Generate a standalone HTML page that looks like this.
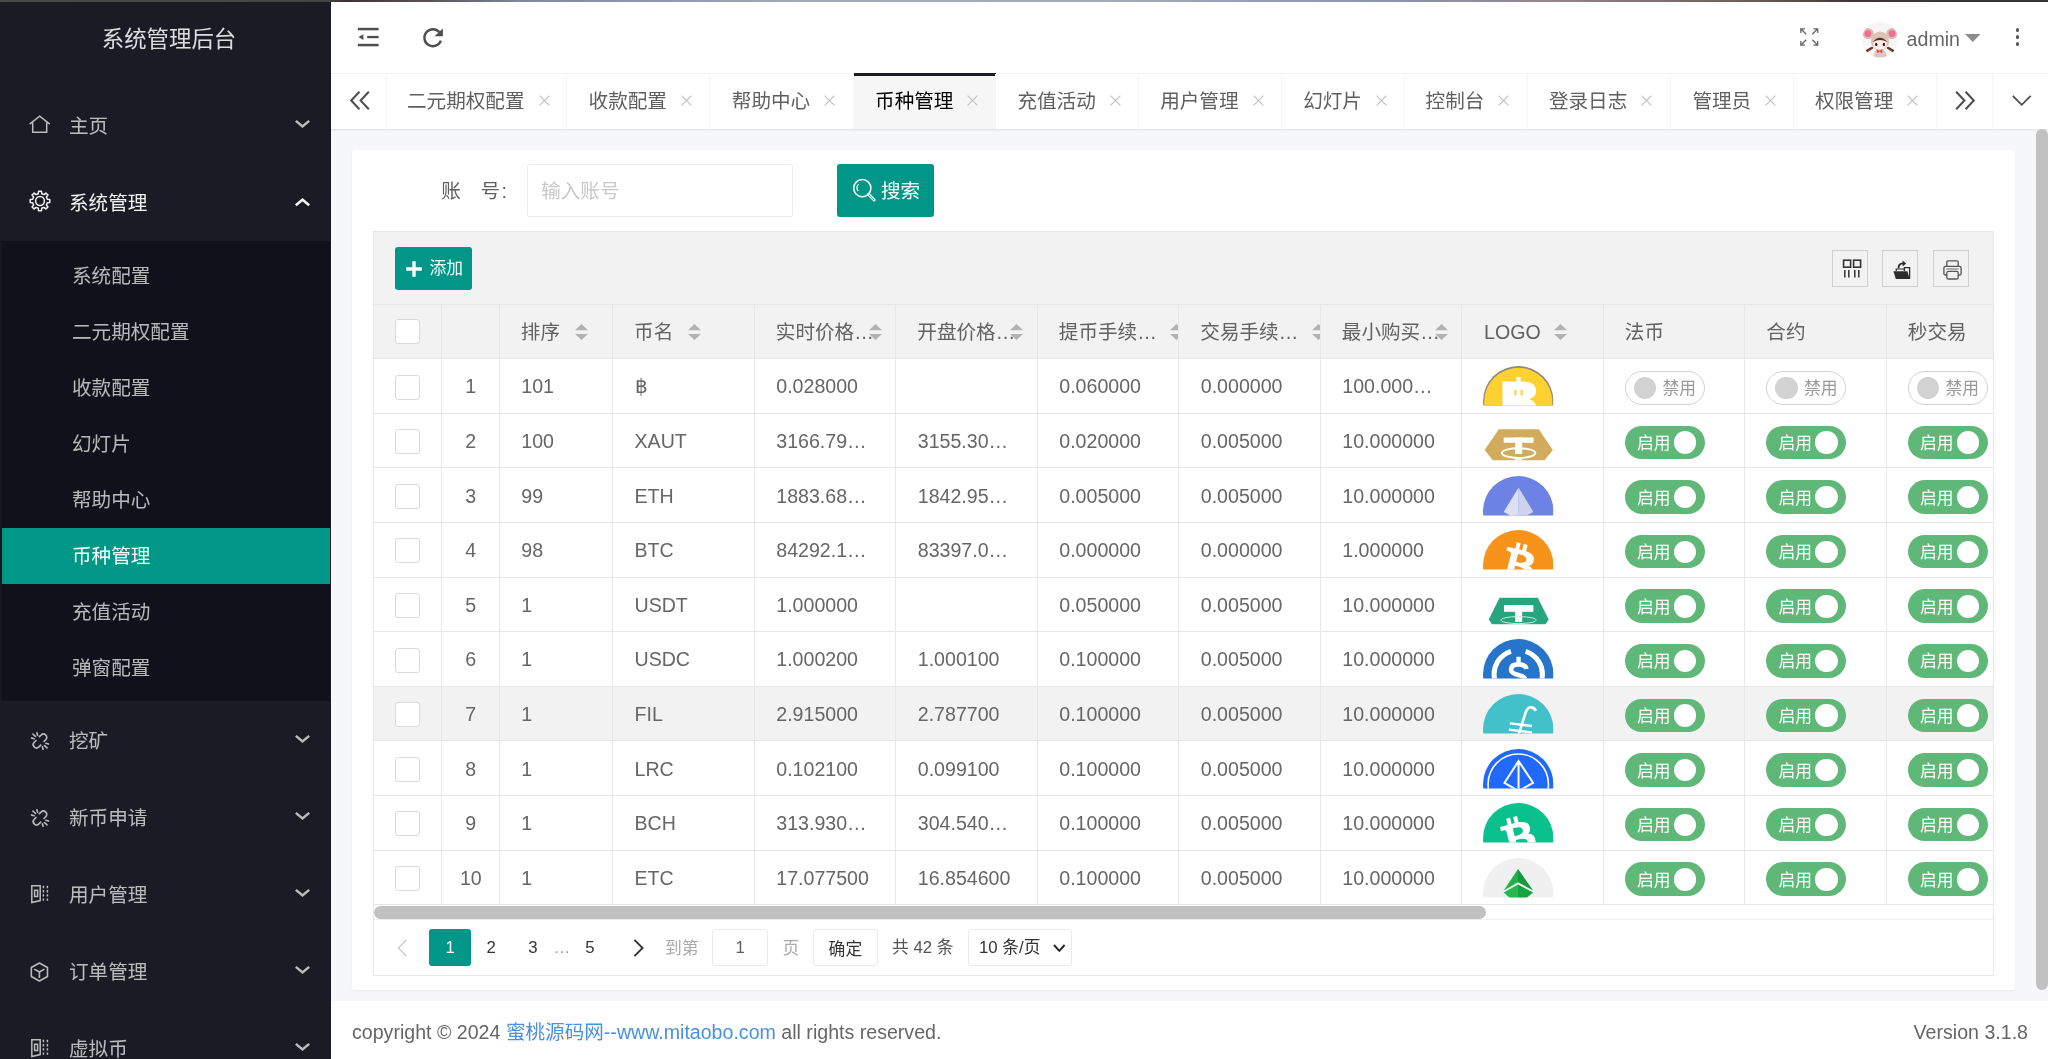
<!DOCTYPE html><html lang="zh-CN"><head><meta charset="utf-8"><title>系统管理后台</title><style>
html,body{margin:0;padding:0}
body{width:2048px;height:1059px;overflow:hidden;position:relative;background:#f6f7f9;font-family:"Liberation Sans","Noto Sans CJK SC",sans-serif;font-size:19.6px;color:#666}
div{box-sizing:border-box}
svg{position:absolute;overflow:visible}
</style></head><body><div id="root" style="position:absolute;left:0;top:0;width:2048px;height:1059px;overflow:hidden;will-change:transform">
<div style="position:absolute;left:0px;top:0px;width:330.5px;height:1059px;background:#1b1b26"></div>
<div style="position:absolute;left:0px;top:240.5px;width:2.4px;height:460.5px;background:#17171d"></div>
<div style="position:absolute;left:2.2px;top:240.5px;width:328.3px;height:460.5px;background:#11111b"></div>
<div style="position:absolute;left:1.8px;top:527.5px;width:328.7px;height:56.25px;background:#009688"></div>
<div style="position:absolute;left:0px;top:19.5px;height:40px;line-height:40px;font-size:22.4px;color:rgba(255,255,255,.85);white-space:nowrap;width:338px;text-align:center;">系统管理后台</div>
<div style="position:absolute;left:69px;top:111.1px;height:30px;line-height:30px;font-size:19.6px;color:rgba(255,255,255,.7);white-space:nowrap;">主页</div>
<svg style="left:29px;top:114px;" width="22" height="20" viewBox="0 0 22 20"><g fill="none" stroke="rgba(255,255,255,.7)" stroke-width="1.5" stroke-linejoin="miter"><path d="M0.6 10.1 L10.7 2.1 L20.8 10.1"/><path d="M3.7 8.6 V18.3 H17.7 V8.6"/></g></svg>
<svg style="left:295.4px;top:120.4px;" width="15" height="8.2" viewBox="0 0 15 8.2"><path d="M0.8 0.9 L7.5 6.499999999999999 L14.2 0.9" fill="none" stroke="rgba(255,255,255,.7)" stroke-width="2.5" stroke-linecap="butt" stroke-linejoin="miter"/></svg>
<div style="position:absolute;left:69px;top:188.1px;height:30px;line-height:30px;font-size:19.6px;color:rgba(255,255,255,.95);white-space:nowrap;">系统管理</div>
<svg style="left:28.6px;top:190.2px;" width="22" height="22" viewBox="0 0 22 22"><g fill="none" stroke="rgba(255,255,255,.95)" stroke-width="1.5" stroke-linejoin="round"><path d="M9.25 3.71 L9.53 1.21 L12.47 1.21 L12.75 3.71 L14.92 4.61 L16.88 3.04 L18.96 5.12 L17.39 7.08 L18.29 9.25 L20.79 9.53 L20.79 12.47 L18.29 12.75 L17.39 14.92 L18.96 16.88 L16.88 18.96 L14.92 17.39 L12.75 18.29 L12.47 20.79 L9.53 20.79 L9.25 18.29 L7.08 17.39 L5.12 18.96 L3.04 16.88 L4.61 14.92 L3.71 12.75 L1.21 12.47 L1.21 9.53 L3.71 9.25 L4.61 7.08 L3.04 5.12 L5.12 3.04 L7.08 4.61Z"/><circle cx="11" cy="11" r="4.4"/></g></svg>
<svg style="left:295.4px;top:198.0px;" width="15" height="8.2" viewBox="0 0 15 8.2"><path d="M0.8 7.299999999999999 L7.5 1.7 L14.2 7.299999999999999" fill="none" stroke="rgba(255,255,255,.95)" stroke-width="2.5" stroke-linecap="butt" stroke-linejoin="miter"/></svg>
<div style="position:absolute;left:69px;top:726.1px;height:30px;line-height:30px;font-size:19.6px;color:rgba(255,255,255,.7);white-space:nowrap;">挖矿</div>
<svg style="left:30.7px;top:732px;" width="18" height="18" viewBox="0 0 20 20"><g fill="none" stroke="rgba(255,255,255,.7)" stroke-width="1.8" stroke-linecap="round">
<path d="M9.2 5.2 L11.2 3.4 A3.6 3.6 0 0 1 16.4 8.6 L14.4 10.6"/>
<path d="M10.8 14.6 L8.8 16.6 A3.6 3.6 0 0 1 3.6 11.4 L5.6 9.4"/>
<path d="M2.2 2.4 L5 5"/><path d="M6.6 0.8 L7.3 3.6"/><path d="M0.6 6.6 L3.4 7.4"/>
<path d="M17.8 17.6 L15 15"/><path d="M13.4 19.2 L12.7 16.4"/><path d="M19.4 13.4 L16.6 12.6"/>
</g></svg>
<svg style="left:295.4px;top:735.4px;" width="15" height="8.2" viewBox="0 0 15 8.2"><path d="M0.8 0.9 L7.5 6.499999999999999 L14.2 0.9" fill="none" stroke="rgba(255,255,255,.7)" stroke-width="2.5" stroke-linecap="butt" stroke-linejoin="miter"/></svg>
<div style="position:absolute;left:69px;top:803.1px;height:30px;line-height:30px;font-size:19.6px;color:rgba(255,255,255,.7);white-space:nowrap;">新币申请</div>
<svg style="left:30.7px;top:809px;" width="18" height="18" viewBox="0 0 20 20"><g fill="none" stroke="rgba(255,255,255,.7)" stroke-width="1.8" stroke-linecap="round">
<path d="M9.2 5.2 L11.2 3.4 A3.6 3.6 0 0 1 16.4 8.6 L14.4 10.6"/>
<path d="M10.8 14.6 L8.8 16.6 A3.6 3.6 0 0 1 3.6 11.4 L5.6 9.4"/>
<path d="M2.2 2.4 L5 5"/><path d="M6.6 0.8 L7.3 3.6"/><path d="M0.6 6.6 L3.4 7.4"/>
<path d="M17.8 17.6 L15 15"/><path d="M13.4 19.2 L12.7 16.4"/><path d="M19.4 13.4 L16.6 12.6"/>
</g></svg>
<svg style="left:295.4px;top:812.4px;" width="15" height="8.2" viewBox="0 0 15 8.2"><path d="M0.8 0.9 L7.5 6.499999999999999 L14.2 0.9" fill="none" stroke="rgba(255,255,255,.7)" stroke-width="2.5" stroke-linecap="butt" stroke-linejoin="miter"/></svg>
<div style="position:absolute;left:69px;top:880.1px;height:30px;line-height:30px;font-size:19.6px;color:rgba(255,255,255,.7);white-space:nowrap;">用户管理</div>
<svg style="left:30.6px;top:884.6px;" width="18" height="19" viewBox="0 0 18 19"><g fill="none" stroke="rgba(255,255,255,.7)" stroke-width="1.5">
<path d="M0.8 0.8 H9.2 V15.6 L0.8 17.6 Z" stroke-linejoin="miter"/>
<path d="M3.6 5.2 H6.6 V11.4 H3.6 Z"/>
<path d="M12.4 0.8 V16" stroke-dasharray="2.4 1.8"/>
<path d="M16.4 0.8 V16" stroke-dasharray="2.4 1.8"/>
</g></svg>
<svg style="left:295.4px;top:889.4px;" width="15" height="8.2" viewBox="0 0 15 8.2"><path d="M0.8 0.9 L7.5 6.499999999999999 L14.2 0.9" fill="none" stroke="rgba(255,255,255,.7)" stroke-width="2.5" stroke-linecap="butt" stroke-linejoin="miter"/></svg>
<div style="position:absolute;left:69px;top:957.1px;height:30px;line-height:30px;font-size:19.6px;color:rgba(255,255,255,.7);white-space:nowrap;">订单管理</div>
<svg style="left:29.6px;top:962.4px;" width="18.8" height="19.8" viewBox="0 0 20 21"><g fill="none" stroke="rgba(255,255,255,.7)" stroke-width="1.7" stroke-linejoin="round">
<path d="M10 1 L18.6 5.8 V15.4 L10 20.2 L1.4 15.4 V5.8 Z"/>
<path d="M4.6 7.6 L10 10.6 L15.4 7.6 M10 10.6 V17"/>
</g></svg>
<svg style="left:295.4px;top:966.4px;" width="15" height="8.2" viewBox="0 0 15 8.2"><path d="M0.8 0.9 L7.5 6.499999999999999 L14.2 0.9" fill="none" stroke="rgba(255,255,255,.7)" stroke-width="2.5" stroke-linecap="butt" stroke-linejoin="miter"/></svg>
<div style="position:absolute;left:69px;top:1034.1px;height:30px;line-height:30px;font-size:19.6px;color:rgba(255,255,255,.7);white-space:nowrap;">虚拟币</div>
<svg style="left:30.6px;top:1038.6px;" width="18" height="19" viewBox="0 0 18 19"><g fill="none" stroke="rgba(255,255,255,.7)" stroke-width="1.5">
<path d="M0.8 0.8 H9.2 V15.6 L0.8 17.6 Z" stroke-linejoin="miter"/>
<path d="M3.6 5.2 H6.6 V11.4 H3.6 Z"/>
<path d="M12.4 0.8 V16" stroke-dasharray="2.4 1.8"/>
<path d="M16.4 0.8 V16" stroke-dasharray="2.4 1.8"/>
</g></svg>
<svg style="left:295.4px;top:1043.4px;" width="15" height="8.2" viewBox="0 0 15 8.2"><path d="M0.8 0.9 L7.5 6.499999999999999 L14.2 0.9" fill="none" stroke="rgba(255,255,255,.7)" stroke-width="2.5" stroke-linecap="butt" stroke-linejoin="miter"/></svg>
<div style="position:absolute;left:72px;top:261.2px;height:30px;line-height:30px;font-size:19.6px;color:rgba(255,255,255,.7);white-space:nowrap;">系统配置</div>
<div style="position:absolute;left:72px;top:317.2px;height:30px;line-height:30px;font-size:19.6px;color:rgba(255,255,255,.7);white-space:nowrap;">二元期权配置</div>
<div style="position:absolute;left:72px;top:373.2px;height:30px;line-height:30px;font-size:19.6px;color:rgba(255,255,255,.7);white-space:nowrap;">收款配置</div>
<div style="position:absolute;left:72px;top:429.2px;height:30px;line-height:30px;font-size:19.6px;color:rgba(255,255,255,.7);white-space:nowrap;">幻灯片</div>
<div style="position:absolute;left:72px;top:485.2px;height:30px;line-height:30px;font-size:19.6px;color:rgba(255,255,255,.7);white-space:nowrap;">帮助中心</div>
<div style="position:absolute;left:72px;top:541.2px;height:30px;line-height:30px;font-size:19.6px;color:#fff;white-space:nowrap;">币种管理</div>
<div style="position:absolute;left:72px;top:597.2px;height:30px;line-height:30px;font-size:19.6px;color:rgba(255,255,255,.7);white-space:nowrap;">充值活动</div>
<div style="position:absolute;left:72px;top:653.2px;height:30px;line-height:30px;font-size:19.6px;color:rgba(255,255,255,.7);white-space:nowrap;">弹窗配置</div>
<div style="position:absolute;left:330.5px;top:0px;width:1717.5px;height:73.75px;background:#fff;border-bottom:1px solid #f3f3f3"></div>
<svg style="left:357px;top:27px;" width="23" height="21" viewBox="0 0 23 21"><g fill="#4f4f4f"><rect x="0.8" y="0.8" width="20.8" height="2.5"/><rect x="10.2" y="8.9" width="11.4" height="2.3"/><rect x="0.8" y="16.8" width="20.8" height="2.5"/><path d="M1.4 10.1 L6.4 7.3 V12.9 Z"/></g></svg>
<svg style="left:422px;top:26px;" width="22" height="23" viewBox="0 0 22 23"><g fill="none" stroke="#4f4f4f" stroke-width="2.4"><path d="M17.4 6.2 A8.5 8.5 0 1 0 18.9 14.6"/></g><path d="M20.9 2.6 V10.2 H12.5 Z" fill="#4f4f4f"/></svg>
<svg style="left:1799.5px;top:27.5px;" width="18.5" height="18" viewBox="0 0 18.5 18"><g fill="none" stroke="#666" stroke-width="1.3" stroke-linecap="butt">
<path d="M0.8 5 V0.8 H5 M0.8 0.8 L6.2 6.2"/>
<path d="M13.5 0.8 H17.7 V5 M17.7 0.8 L12.3 6.2"/>
<path d="M0.8 13 V17.2 H5 M0.8 17.2 L6.2 11.8"/>
<path d="M13.5 17.2 H17.7 V13 M17.7 17.2 L12.3 11.8"/>
</g></svg>
<svg style="left:1862px;top:20.5px;" width="36" height="37" viewBox="0 0 36 37"><defs><clipPath id="avc"><circle cx="18" cy="18.5" r="18"/></clipPath></defs>
<g clip-path="url(#avc)"><rect width="36" height="37" fill="#f6f6f6"/>
<circle cx="6.2" cy="12.6" r="5.5" fill="#d9bab1"/><circle cx="29.8" cy="12.6" r="5.5" fill="#d9bab1"/>
<circle cx="5.9" cy="12.6" r="3.4" fill="#ef7090"/><circle cx="30.1" cy="12.6" r="3.4" fill="#ef7090"/>
<ellipse cx="18" cy="20" rx="9.2" ry="9.4" fill="#dcc3ba"/>
<ellipse cx="18" cy="23.4" rx="6.9" ry="5.3" fill="#fdebe6"/>
<path d="M10.6 21 Q18 12.4 25.4 21 Q18 17 10.6 21Z" fill="#5c3028"/>
<ellipse cx="14.2" cy="23.4" rx="1.2" ry="1.7" fill="#3b1c1c"/><ellipse cx="21.9" cy="23.4" rx="1.2" ry="1.7" fill="#3b1c1c"/>
<path d="M9.8 27 L4.6 30.2 M26.2 27 L31.4 30.2" stroke="#6b3a30" stroke-width="2.6" stroke-linecap="round" fill="none"/>
<path d="M11 37 Q11.5 28.6 18 28.6 Q24.5 28.6 25 37 Z" fill="#dcc6be"/>
<path d="M14.6 28 L17.6 29.9 L20.6 28 L20 32.2 L17.6 30.8 L15.2 32.2Z" fill="#e8442e"/>
</g></svg>
<div style="position:absolute;left:1906.6px;top:24.6px;height:28px;line-height:28px;font-size:19.6px;color:#666;white-space:nowrap;">admin</div>
<svg style="left:1964.5px;top:33.6px;" width="15.5" height="8" viewBox="0 0 15.5 8"><path d="M0 0 H15.5 L7.75 8Z" fill="#8c8c8c"/></svg>
<div style="position:absolute;left:2015.5px;top:28.1px;width:3.8px;height:3.8px;background:#555;border-radius:50%"></div>
<div style="position:absolute;left:2015.5px;top:35.0px;width:3.8px;height:3.8px;background:#555;border-radius:50%"></div>
<div style="position:absolute;left:2015.5px;top:41.9px;width:3.8px;height:3.8px;background:#555;border-radius:50%"></div>
<div style="position:absolute;left:330.5px;top:73.75px;width:1717.5px;height:55px;background:#fff;box-shadow:0 1px 2px rgba(0,0,0,.10)"></div>
<div style="position:absolute;left:386px;top:73.75px;width:1px;height:55px;background:#f5f5f5"></div>
<div style="position:absolute;left:407.0px;top:86.1px;height:30px;line-height:30px;font-size:19.6px;color:#5f5f5f;white-space:nowrap;">二元期权配置</div>
<svg style="left:538.5px;top:95.2px;" width="11" height="11" viewBox="0 0 11 11"><path d="M0.6 0.6 L10.4 10.4 M10.4 0.6 L0.6 10.4" stroke="#c2c2c2" stroke-width="1.2" fill="none"/></svg>
<div style="position:absolute;left:566px;top:73.75px;width:1px;height:55px;background:#f5f5f5"></div>
<div style="position:absolute;left:588.6px;top:86.1px;height:30px;line-height:30px;font-size:19.6px;color:#5f5f5f;white-space:nowrap;">收款配置</div>
<svg style="left:680.9px;top:95.2px;" width="11" height="11" viewBox="0 0 11 11"><path d="M0.6 0.6 L10.4 10.4 M10.4 0.6 L0.6 10.4" stroke="#c2c2c2" stroke-width="1.2" fill="none"/></svg>
<div style="position:absolute;left:709px;top:73.75px;width:1px;height:55px;background:#f5f5f5"></div>
<div style="position:absolute;left:731.8000000000001px;top:86.1px;height:30px;line-height:30px;font-size:19.6px;color:#5f5f5f;white-space:nowrap;">帮助中心</div>
<svg style="left:824.1px;top:95.2px;" width="11" height="11" viewBox="0 0 11 11"><path d="M0.6 0.6 L10.4 10.4 M10.4 0.6 L0.6 10.4" stroke="#c2c2c2" stroke-width="1.2" fill="none"/></svg>
<div style="position:absolute;left:853.5px;top:73.75px;width:142.5px;height:55px;background:#f6f6f6"></div>
<div style="position:absolute;left:853.5px;top:72.6px;width:142.5px;height:3px;background:#1c1c26"></div>
<div style="position:absolute;left:852.5px;top:73.75px;width:1px;height:55px;background:#f5f5f5"></div>
<div style="position:absolute;left:875.1px;top:86.1px;height:30px;line-height:30px;font-size:19.6px;color:#000;white-space:nowrap;">币种管理</div>
<svg style="left:967.4px;top:95.2px;" width="11" height="11" viewBox="0 0 11 11"><path d="M0.6 0.6 L10.4 10.4 M10.4 0.6 L0.6 10.4" stroke="#c2c2c2" stroke-width="1.2" fill="none"/></svg>
<div style="position:absolute;left:995px;top:73.75px;width:1px;height:55px;background:#f5f5f5"></div>
<div style="position:absolute;left:1017.4000000000001px;top:86.1px;height:30px;line-height:30px;font-size:19.6px;color:#5f5f5f;white-space:nowrap;">充值活动</div>
<svg style="left:1109.7px;top:95.2px;" width="11" height="11" viewBox="0 0 11 11"><path d="M0.6 0.6 L10.4 10.4 M10.4 0.6 L0.6 10.4" stroke="#c2c2c2" stroke-width="1.2" fill="none"/></svg>
<div style="position:absolute;left:1138.25px;top:73.75px;width:1px;height:55px;background:#f5f5f5"></div>
<div style="position:absolute;left:1160.2px;top:86.1px;height:30px;line-height:30px;font-size:19.6px;color:#5f5f5f;white-space:nowrap;">用户管理</div>
<svg style="left:1252.5px;top:95.2px;" width="11" height="11" viewBox="0 0 11 11"><path d="M0.6 0.6 L10.4 10.4 M10.4 0.6 L0.6 10.4" stroke="#c2c2c2" stroke-width="1.2" fill="none"/></svg>
<div style="position:absolute;left:1280.75px;top:73.75px;width:1px;height:55px;background:#f5f5f5"></div>
<div style="position:absolute;left:1303.2px;top:86.1px;height:30px;line-height:30px;font-size:19.6px;color:#5f5f5f;white-space:nowrap;">幻灯片</div>
<svg style="left:1375.8999999999999px;top:95.2px;" width="11" height="11" viewBox="0 0 11 11"><path d="M0.6 0.6 L10.4 10.4 M10.4 0.6 L0.6 10.4" stroke="#c2c2c2" stroke-width="1.2" fill="none"/></svg>
<div style="position:absolute;left:1404px;top:73.75px;width:1px;height:55px;background:#f5f5f5"></div>
<div style="position:absolute;left:1425.6000000000001px;top:86.1px;height:30px;line-height:30px;font-size:19.6px;color:#5f5f5f;white-space:nowrap;">控制台</div>
<svg style="left:1498.3px;top:95.2px;" width="11" height="11" viewBox="0 0 11 11"><path d="M0.6 0.6 L10.4 10.4 M10.4 0.6 L0.6 10.4" stroke="#c2c2c2" stroke-width="1.2" fill="none"/></svg>
<div style="position:absolute;left:1527px;top:73.75px;width:1px;height:55px;background:#f5f5f5"></div>
<div style="position:absolute;left:1548.9px;top:86.1px;height:30px;line-height:30px;font-size:19.6px;color:#5f5f5f;white-space:nowrap;">登录日志</div>
<svg style="left:1641.2px;top:95.2px;" width="11" height="11" viewBox="0 0 11 11"><path d="M0.6 0.6 L10.4 10.4 M10.4 0.6 L0.6 10.4" stroke="#c2c2c2" stroke-width="1.2" fill="none"/></svg>
<div style="position:absolute;left:1670.25px;top:73.75px;width:1px;height:55px;background:#f5f5f5"></div>
<div style="position:absolute;left:1692.4px;top:86.1px;height:30px;line-height:30px;font-size:19.6px;color:#5f5f5f;white-space:nowrap;">管理员</div>
<svg style="left:1765.1px;top:95.2px;" width="11" height="11" viewBox="0 0 11 11"><path d="M0.6 0.6 L10.4 10.4 M10.4 0.6 L0.6 10.4" stroke="#c2c2c2" stroke-width="1.2" fill="none"/></svg>
<div style="position:absolute;left:1793px;top:73.75px;width:1px;height:55px;background:#f5f5f5"></div>
<div style="position:absolute;left:1814.9px;top:86.1px;height:30px;line-height:30px;font-size:19.6px;color:#5f5f5f;white-space:nowrap;">权限管理</div>
<svg style="left:1907.2px;top:95.2px;" width="11" height="11" viewBox="0 0 11 11"><path d="M0.6 0.6 L10.4 10.4 M10.4 0.6 L0.6 10.4" stroke="#c2c2c2" stroke-width="1.2" fill="none"/></svg>
<div style="position:absolute;left:1936px;top:73.75px;width:1px;height:55px;background:#f5f5f5"></div>
<div style="position:absolute;left:1992.25px;top:73.75px;width:1px;height:55px;background:#f5f5f5"></div>
<svg style="left:349.5px;top:91px;" width="20" height="19" viewBox="0 0 20 19"><path d="M9.4 0.8 L1.2 9.5 L9.4 18.2 M18.8 0.8 L10.6 9.5 L18.8 18.2" fill="none" stroke="#4c4c4c" stroke-width="2"/></svg>
<svg style="left:1955.2px;top:91px;" width="20" height="19" viewBox="0 0 20 19"><path d="M1.2 0.8 L9.4 9.5 L1.2 18.2 M10.6 0.8 L18.8 9.5 L10.6 18.2" fill="none" stroke="#4c4c4c" stroke-width="2"/></svg>
<svg style="left:2011.5px;top:95px;" width="19.5" height="11" viewBox="0 0 19.5 11"><path d="M0.8 0.8 L9.75 9.8 L18.7 0.8" fill="none" stroke="#4c4c4c" stroke-width="1.8"/></svg>
<div style="position:absolute;left:351.5px;top:149.5px;width:1663.25px;height:840.5px;background:#fff;border-radius:3px;box-shadow:0 1px 2px rgba(0,0,0,.05)"></div>
<div style="position:absolute;left:441.25px;top:176.4px;height:30px;line-height:30px;font-size:19.6px;color:#5f5f5f;white-space:nowrap;">账</div>
<div style="position:absolute;left:480.4px;top:176.4px;height:30px;line-height:30px;font-size:19.6px;color:#5f5f5f;white-space:nowrap;letter-spacing:1.6px;">号:</div>
<div style="position:absolute;left:526.6px;top:164px;width:266px;height:53px;background:#fff;border:1.3px solid #ececec;border-radius:2px"></div>
<div style="position:absolute;left:541.2px;top:176.2px;height:30px;line-height:30px;font-size:19.6px;color:#c8c8c8;white-space:nowrap;">输入账号</div>
<div style="position:absolute;left:837px;top:164px;width:97px;height:53px;background:#009688;border-radius:3px"></div>
<svg style="left:852px;top:177.5px;" width="24" height="24" viewBox="0 0 24 24"><g fill="none" stroke="#fff" stroke-width="1.5"><circle cx="10.3" cy="10.2" r="8.6"/><path d="M6.6 6.2 A5.4 5.4 0 0 0 6.2 13.2" stroke-width="1.2"/><path d="M16.6 16.4 L22.2 22" stroke-width="3" stroke-linecap="round"/><path d="M16.9 16.7 L21.9 21.7" stroke="#009688" stroke-width="0.9" stroke-linecap="round"/></g></svg>
<div style="position:absolute;left:881px;top:176.0px;height:30px;line-height:30px;font-size:19.6px;color:#fff;white-space:nowrap;">搜索</div>
<div style="position:absolute;left:373px;top:231.25px;width:1620.5px;height:744.25px;overflow:hidden;background:#fff">
<div style="position:absolute;left:0px;top:0px;width:1620.5px;height:128.2px;background:#f2f2f2"></div>
<div style="position:absolute;left:22px;top:15.75px;width:76.5px;height:42.5px;background:#009688;border-radius:3px"></div>
<svg style="left:33.2px;top:29.55px;" width="16" height="16" viewBox="0 0 16 16"><path d="M8 0.2 V15.8 M0.2 8 H15.8" stroke="#fff" stroke-width="3.4" fill="none"/></svg>
<div style="position:absolute;left:56.5px;top:24.85px;height:26px;line-height:26px;font-size:16.8px;color:#fff;white-space:nowrap;">添加</div>
<div style="position:absolute;left:1459.2px;top:19.05px;width:36px;height:36.4px;border:1px solid #cfcfcf"></div>
<div style="position:absolute;left:1509.3px;top:19.05px;width:36px;height:36.4px;border:1px solid #cfcfcf"></div>
<div style="position:absolute;left:1559.9px;top:19.05px;width:36px;height:36.4px;border:1px solid #cfcfcf"></div>
<svg style="left:1469px;top:27.75px;" width="20" height="20" viewBox="0 0 20 20"><g fill="none" stroke="#333" stroke-width="1.6"><rect x="1.6" y="1.2" width="7" height="7"/><rect x="11.6" y="1.2" width="7" height="7"/><path d="M2.8 11 V18.6 M6.8 11 V18.6 M12.8 11 V18.6 M16.8 11 V18.6" stroke-width="1.5"/></g></svg>
<svg style="left:1519.5px;top:28.25px;" width="19" height="20" viewBox="0 0 19 20"><path d="M0.4 11.2 H14.4 L16.6 19 H2.8 Z" fill="#2b2b2b"/><path d="M16.6 19 V7.6 H11.4 V10.6" fill="none" stroke="#2b2b2b" stroke-width="1.3"/><path d="M3.2 11 V9 H11.4 V11" fill="none" stroke="#2b2b2b" stroke-width="1.2"/><path d="M5.6 8.4 Q5.4 3.4 10 3.4" fill="none" stroke="#2b2b2b" stroke-width="1.8"/><path d="M9.6 0.4 L13.2 3.4 L9.6 6.4Z" fill="#2b2b2b"/></svg>
<svg style="left:1569.5px;top:28.25px;" width="19" height="20" viewBox="0 0 19 20"><g fill="none" stroke="#555" stroke-width="1.3" stroke-linejoin="round"><path d="M3.8 6.4 V2.2 Q3.8 0.9 5.1 0.9 H13.9 Q15.2 0.9 15.2 2.2 V6.4"/><rect x="0.9" y="6.4" width="17.2" height="8.6" rx="1.6"/><rect x="3.8" y="11.4" width="11.4" height="7.6" rx="1.6" fill="#f2f2f2"/><path d="M3.4 9 H15.6" stroke-width="0.9"/></g></svg>
<div style="position:absolute;left:0px;top:72.75px;width:1620.5px;height:1.25px;background:#e7e7e7"></div>
<div style="position:absolute;left:0px;top:455.1px;width:1620.5px;height:54.6px;background:#f2f2f2"></div>
<div style="position:absolute;left:0px;top:126.75px;width:1620.5px;height:1.35px;background:#e9e9e9"></div>
<div style="position:absolute;left:0px;top:181.75px;width:1620.5px;height:1.35px;background:#e7e7e7"></div>
<div style="position:absolute;left:0px;top:235.75px;width:1620.5px;height:1.35px;background:#e7e7e7"></div>
<div style="position:absolute;left:0px;top:290.75px;width:1620.5px;height:1.35px;background:#e7e7e7"></div>
<div style="position:absolute;left:0px;top:345.75px;width:1620.5px;height:1.35px;background:#e7e7e7"></div>
<div style="position:absolute;left:0px;top:399.75px;width:1620.5px;height:1.35px;background:#e7e7e7"></div>
<div style="position:absolute;left:0px;top:454.75px;width:1620.5px;height:1.35px;background:#e7e7e7"></div>
<div style="position:absolute;left:0px;top:508.75px;width:1620.5px;height:1.35px;background:#e7e7e7"></div>
<div style="position:absolute;left:0px;top:563.75px;width:1620.5px;height:1.35px;background:#e7e7e7"></div>
<div style="position:absolute;left:0px;top:618.75px;width:1620.5px;height:1.35px;background:#e7e7e7"></div>
<div style="position:absolute;left:0px;top:672.75px;width:1620.5px;height:1.35px;background:#e7e7e7"></div>
<div style="position:absolute;left:68px;top:73.25px;width:1.35px;height:600.25px;background:#e7e7e7"></div>
<div style="position:absolute;left:126px;top:73.25px;width:1.35px;height:600.25px;background:#e7e7e7"></div>
<div style="position:absolute;left:239px;top:73.25px;width:1.35px;height:600.25px;background:#e7e7e7"></div>
<div style="position:absolute;left:381px;top:73.25px;width:1.35px;height:600.25px;background:#e7e7e7"></div>
<div style="position:absolute;left:522px;top:73.25px;width:1.35px;height:600.25px;background:#e7e7e7"></div>
<div style="position:absolute;left:664px;top:73.25px;width:1.35px;height:600.25px;background:#e7e7e7"></div>
<div style="position:absolute;left:805px;top:73.25px;width:1.35px;height:600.25px;background:#e7e7e7"></div>
<div style="position:absolute;left:947px;top:73.25px;width:1.35px;height:600.25px;background:#e7e7e7"></div>
<div style="position:absolute;left:1088px;top:73.25px;width:1.35px;height:600.25px;background:#e7e7e7"></div>
<div style="position:absolute;left:1230px;top:73.25px;width:1.35px;height:600.25px;background:#e7e7e7"></div>
<div style="position:absolute;left:1371px;top:73.25px;width:1.35px;height:600.25px;background:#e7e7e7"></div>
<div style="position:absolute;left:1513px;top:73.25px;width:1.35px;height:600.25px;background:#e7e7e7"></div>
<div style="position:absolute;left:126.95px;top:73.25px;width:111.85px;height:54.25px;overflow:hidden"><div style="position:absolute;left:20.9px;top:12.899999999999999px;height:30px;line-height:30px;font-size:19.6px;color:#626262;white-space:nowrap;">排序</div><svg style="left:75.05px;top:19.899999999999977px;" width="13" height="16" viewBox="0 0 13 16"><path d="M0 6.2 H13 L6.5 0Z M0 9.9 H13 L6.5 16Z" fill="#b2b2b2"/></svg></div>
<div style="position:absolute;left:240.2px;top:73.25px;width:140.35px;height:54.25px;overflow:hidden"><div style="position:absolute;left:20.9px;top:12.899999999999999px;height:30px;line-height:30px;font-size:19.6px;color:#626262;white-space:nowrap;">币名</div><svg style="left:74.40000000000002px;top:19.899999999999977px;" width="13" height="16" viewBox="0 0 13 16"><path d="M0 6.2 H13 L6.5 0Z M0 9.9 H13 L6.5 16Z" fill="#b2b2b2"/></svg></div>
<div style="position:absolute;left:381.95px;top:73.25px;width:140.1px;height:54.25px;overflow:hidden"><div style="position:absolute;left:20.9px;top:12.899999999999999px;height:30px;line-height:30px;font-size:19.6px;color:#626262;white-space:nowrap;">实时价格…</div><svg style="left:113.8px;top:19.899999999999977px;" width="13" height="16" viewBox="0 0 13 16"><path d="M0 6.2 H13 L6.5 0Z M0 9.9 H13 L6.5 16Z" fill="#b2b2b2"/></svg></div>
<div style="position:absolute;left:523.45px;top:73.25px;width:140.1px;height:54.25px;overflow:hidden"><div style="position:absolute;left:20.9px;top:12.899999999999999px;height:30px;line-height:30px;font-size:19.6px;color:#626262;white-space:nowrap;">开盘价格…</div><svg style="left:113.55px;top:19.899999999999977px;" width="13" height="16" viewBox="0 0 13 16"><path d="M0 6.2 H13 L6.5 0Z M0 9.9 H13 L6.5 16Z" fill="#b2b2b2"/></svg></div>
<div style="position:absolute;left:664.95px;top:73.25px;width:140.1px;height:54.25px;overflow:hidden"><div style="position:absolute;left:20.9px;top:12.899999999999999px;height:30px;line-height:30px;font-size:19.6px;color:#626262;white-space:nowrap;">提币手续…</div><svg style="left:132.55px;top:19.899999999999977px;" width="13" height="16" viewBox="0 0 13 16"><path d="M0 6.2 H13 L6.5 0Z M0 9.9 H13 L6.5 16Z" fill="#b2b2b2"/></svg></div>
<div style="position:absolute;left:806.45px;top:73.25px;width:140.1px;height:54.25px;overflow:hidden"><div style="position:absolute;left:20.9px;top:12.899999999999999px;height:30px;line-height:30px;font-size:19.6px;color:#626262;white-space:nowrap;">交易手续…</div><svg style="left:133.05px;top:19.899999999999977px;" width="13" height="16" viewBox="0 0 13 16"><path d="M0 6.2 H13 L6.5 0Z M0 9.9 H13 L6.5 16Z" fill="#b2b2b2"/></svg></div>
<div style="position:absolute;left:947.95px;top:73.25px;width:140.1px;height:54.25px;overflow:hidden"><div style="position:absolute;left:20.9px;top:12.899999999999999px;height:30px;line-height:30px;font-size:19.6px;color:#626262;white-space:nowrap;">最小购买…</div><svg style="left:113.6499999999999px;top:19.899999999999977px;" width="13" height="16" viewBox="0 0 13 16"><path d="M0 6.2 H13 L6.5 0Z M0 9.9 H13 L6.5 16Z" fill="#b2b2b2"/></svg></div>
<div style="position:absolute;left:1089.45px;top:73.25px;width:140.1px;height:54.25px;overflow:hidden"><div style="position:absolute;left:21.6px;top:12.100000000000001px;height:30px;line-height:30px;font-size:19.6px;color:#626262;white-space:nowrap;">LOGO</div><svg style="left:91.45000000000009px;top:19.899999999999977px;" width="13" height="16" viewBox="0 0 13 16"><path d="M0 6.2 H13 L6.5 0Z M0 9.9 H13 L6.5 16Z" fill="#b2b2b2"/></svg></div>
<div style="position:absolute;left:1230.95px;top:73.25px;width:140.1px;height:54.25px;overflow:hidden"><div style="position:absolute;left:20.9px;top:12.899999999999999px;height:30px;line-height:30px;font-size:19.6px;color:#626262;white-space:nowrap;">法币</div></div>
<div style="position:absolute;left:1372.45px;top:73.25px;width:140.1px;height:54.25px;overflow:hidden"><div style="position:absolute;left:20.9px;top:12.899999999999999px;height:30px;line-height:30px;font-size:19.6px;color:#626262;white-space:nowrap;">合约</div></div>
<div style="position:absolute;left:1513.95px;top:73.25px;width:105.85px;height:54.25px;overflow:hidden"><div style="position:absolute;left:20.9px;top:12.899999999999999px;height:30px;line-height:30px;font-size:19.6px;color:#626262;white-space:nowrap;">秒交易</div></div>
<div style="position:absolute;left:22px;top:88.15px;width:25px;height:25px;background:#fff;border:1px solid #dadada;border-radius:3px"></div>
<div style="position:absolute;left:22px;top:143.4px;width:25px;height:25px;background:#fff;border:1px solid #dadada;border-radius:3px"></div>
<div style="position:absolute;left:68.8px;top:140.1px;height:30px;line-height:30px;font-size:19.6px;color:#666;white-space:nowrap;width:58px;text-align:center;">1</div>
<div style="position:absolute;left:148.25px;top:140.1px;height:30px;line-height:30px;font-size:19.6px;color:#666;white-space:nowrap;">101</div>
<div style="position:absolute;left:261.5px;top:140.1px;height:30px;line-height:30px;font-size:19.6px;color:#666;white-space:nowrap;">฿</div>
<div style="position:absolute;left:403.25px;top:140.1px;height:30px;line-height:30px;font-size:19.6px;color:#666;white-space:nowrap;">0.028000</div>
<div style="position:absolute;left:686.25px;top:140.1px;height:30px;line-height:30px;font-size:19.6px;color:#666;white-space:nowrap;">0.060000</div>
<div style="position:absolute;left:827.75px;top:140.1px;height:30px;line-height:30px;font-size:19.6px;color:#666;white-space:nowrap;">0.000000</div>
<div style="position:absolute;left:969.25px;top:140.1px;height:30px;line-height:30px;font-size:19.6px;color:#666;white-space:nowrap;">100.000…</div>
<svg style="left:1109.7px;top:135.2px;" width="70.5" height="39.4" viewBox="0 0 70.5 39.4"><defs><clipPath id="lg0"><rect x="0" y="0" width="70.5" height="39.4"/></clipPath></defs><g clip-path="url(#lg0)"><circle cx="35.25" cy="35.25" r="35.25" fill="#8d8a7c"/><circle cx="35.25" cy="35.9" r="34.1" fill="#fdd230"/><path d="M19.5 15.5 H33.5 V10.9 H37.6 V15.5 H42 Q53.2 16.5 53.2 25 Q53.2 31 46 33.2 Q52.5 35 53.6 41 H19.5 Z" fill="#fff"/><rect x="31.4" y="23.9" width="2.1" height="5.4" fill="#fdd230"/><rect x="37.6" y="23.9" width="2.1" height="5.4" fill="#fdd230"/><path d="M30.6 41 V37 H40 Q44 37.4 45 41Z" fill="#fdd230" opacity=".0"/></g></svg>
<div style="position:absolute;left:1251.7px;top:139.8px;width:80.3px;height:33.6px;background:#fff;border:1px solid #d2d2d2;border-radius:17px"><div style="position:absolute;left:8.2px;top:5.0px;width:22.2px;height:22.2px;background:#d2d2d2;border-radius:50%"></div><div style="position:absolute;left:36.8px;top:5.399999999999999px;height:24px;line-height:24px;font-size:16.8px;color:#999;white-space:nowrap;">禁用</div></div>
<div style="position:absolute;left:1393.2px;top:139.8px;width:80.3px;height:33.6px;background:#fff;border:1px solid #d2d2d2;border-radius:17px"><div style="position:absolute;left:8.2px;top:5.0px;width:22.2px;height:22.2px;background:#d2d2d2;border-radius:50%"></div><div style="position:absolute;left:36.8px;top:5.399999999999999px;height:24px;line-height:24px;font-size:16.8px;color:#999;white-space:nowrap;">禁用</div></div>
<div style="position:absolute;left:1534.7px;top:139.8px;width:80.3px;height:33.6px;background:#fff;border:1px solid #d2d2d2;border-radius:17px"><div style="position:absolute;left:8.2px;top:5.0px;width:22.2px;height:22.2px;background:#d2d2d2;border-radius:50%"></div><div style="position:absolute;left:36.8px;top:5.399999999999999px;height:24px;line-height:24px;font-size:16.8px;color:#999;white-space:nowrap;">禁用</div></div>
<div style="position:absolute;left:22px;top:198.0px;width:25px;height:25px;background:#fff;border:1px solid #dadada;border-radius:3px"></div>
<div style="position:absolute;left:68.8px;top:194.7px;height:30px;line-height:30px;font-size:19.6px;color:#666;white-space:nowrap;width:58px;text-align:center;">2</div>
<div style="position:absolute;left:148.25px;top:194.7px;height:30px;line-height:30px;font-size:19.6px;color:#666;white-space:nowrap;">100</div>
<div style="position:absolute;left:261.5px;top:194.7px;height:30px;line-height:30px;font-size:19.6px;color:#666;white-space:nowrap;">XAUT</div>
<div style="position:absolute;left:403.25px;top:194.7px;height:30px;line-height:30px;font-size:19.6px;color:#666;white-space:nowrap;">3166.79…</div>
<div style="position:absolute;left:544.75px;top:194.7px;height:30px;line-height:30px;font-size:19.6px;color:#666;white-space:nowrap;">3155.30…</div>
<div style="position:absolute;left:686.25px;top:194.7px;height:30px;line-height:30px;font-size:19.6px;color:#666;white-space:nowrap;">0.020000</div>
<div style="position:absolute;left:827.75px;top:194.7px;height:30px;line-height:30px;font-size:19.6px;color:#666;white-space:nowrap;">0.005000</div>
<div style="position:absolute;left:969.25px;top:194.7px;height:30px;line-height:30px;font-size:19.6px;color:#666;white-space:nowrap;">10.000000</div>
<svg style="left:1109.7px;top:189.8px;" width="70.5" height="39.4" viewBox="0 0 70.5 39.4"><defs><clipPath id="lg1"><rect x="0" y="0" width="70.5" height="39.4"/></clipPath></defs><g clip-path="url(#lg1)"><path d="M15.8 8.2 H55.8 L69.8 29 L61.5 39.6 H10.1 L1.6 29 Z" fill="#d2ac5c"/><rect x="20.7" y="16.5" width="29.9" height="5.3" fill="#fff"/><rect x="32.1" y="16.5" width="7.1" height="16.4" fill="#fff"/><rect x="32.1" y="36.8" width="7.1" height="3" fill="#fff"/><ellipse cx="35.6" cy="32.1" rx="16.7" ry="4.9" fill="none" stroke="#fff" stroke-width="2"/></g></svg>
<div style="position:absolute;left:1251.7px;top:194.4px;width:80.3px;height:33.6px;background:#5fb878;border-radius:17px"><div style="position:absolute;left:49.1px;top:5.7px;width:22.4px;height:22.4px;background:#fff;border-radius:50%"></div><div style="position:absolute;left:12.4px;top:6.399999999999999px;height:24px;line-height:24px;font-size:16.8px;color:#fff;white-space:nowrap;">启用</div></div>
<div style="position:absolute;left:1393.2px;top:194.4px;width:80.3px;height:33.6px;background:#5fb878;border-radius:17px"><div style="position:absolute;left:49.1px;top:5.7px;width:22.4px;height:22.4px;background:#fff;border-radius:50%"></div><div style="position:absolute;left:12.4px;top:6.399999999999999px;height:24px;line-height:24px;font-size:16.8px;color:#fff;white-space:nowrap;">启用</div></div>
<div style="position:absolute;left:1534.7px;top:194.4px;width:80.3px;height:33.6px;background:#5fb878;border-radius:17px"><div style="position:absolute;left:49.1px;top:5.7px;width:22.4px;height:22.4px;background:#fff;border-radius:50%"></div><div style="position:absolute;left:12.4px;top:6.399999999999999px;height:24px;line-height:24px;font-size:16.8px;color:#fff;white-space:nowrap;">启用</div></div>
<div style="position:absolute;left:22px;top:252.6px;width:25px;height:25px;background:#fff;border:1px solid #dadada;border-radius:3px"></div>
<div style="position:absolute;left:68.8px;top:249.3px;height:30px;line-height:30px;font-size:19.6px;color:#666;white-space:nowrap;width:58px;text-align:center;">3</div>
<div style="position:absolute;left:148.25px;top:249.3px;height:30px;line-height:30px;font-size:19.6px;color:#666;white-space:nowrap;">99</div>
<div style="position:absolute;left:261.5px;top:249.3px;height:30px;line-height:30px;font-size:19.6px;color:#666;white-space:nowrap;">ETH</div>
<div style="position:absolute;left:403.25px;top:249.3px;height:30px;line-height:30px;font-size:19.6px;color:#666;white-space:nowrap;">1883.68…</div>
<div style="position:absolute;left:544.75px;top:249.3px;height:30px;line-height:30px;font-size:19.6px;color:#666;white-space:nowrap;">1842.95…</div>
<div style="position:absolute;left:686.25px;top:249.3px;height:30px;line-height:30px;font-size:19.6px;color:#666;white-space:nowrap;">0.005000</div>
<div style="position:absolute;left:827.75px;top:249.3px;height:30px;line-height:30px;font-size:19.6px;color:#666;white-space:nowrap;">0.005000</div>
<div style="position:absolute;left:969.25px;top:249.3px;height:30px;line-height:30px;font-size:19.6px;color:#666;white-space:nowrap;">10.000000</div>
<svg style="left:1109.7px;top:244.4px;" width="70.5" height="39.4" viewBox="0 0 70.5 39.4"><defs><clipPath id="lg2"><rect x="0" y="0" width="70.5" height="39.4"/></clipPath></defs><g clip-path="url(#lg2)"><circle cx="35.25" cy="35.25" r="35.25" fill="#6c82e4" /><path d="M35.6 11.5 L20.7 35.9 L35.6 44 Z" fill="#dde0f3"/><path d="M35.6 11.5 L50.4 35.9 L35.6 44 Z" fill="#ced2ec"/></g></svg>
<div style="position:absolute;left:1251.7px;top:249.0px;width:80.3px;height:33.6px;background:#5fb878;border-radius:17px"><div style="position:absolute;left:49.1px;top:5.7px;width:22.4px;height:22.4px;background:#fff;border-radius:50%"></div><div style="position:absolute;left:12.4px;top:6.399999999999999px;height:24px;line-height:24px;font-size:16.8px;color:#fff;white-space:nowrap;">启用</div></div>
<div style="position:absolute;left:1393.2px;top:249.0px;width:80.3px;height:33.6px;background:#5fb878;border-radius:17px"><div style="position:absolute;left:49.1px;top:5.7px;width:22.4px;height:22.4px;background:#fff;border-radius:50%"></div><div style="position:absolute;left:12.4px;top:6.399999999999999px;height:24px;line-height:24px;font-size:16.8px;color:#fff;white-space:nowrap;">启用</div></div>
<div style="position:absolute;left:1534.7px;top:249.0px;width:80.3px;height:33.6px;background:#5fb878;border-radius:17px"><div style="position:absolute;left:49.1px;top:5.7px;width:22.4px;height:22.4px;background:#fff;border-radius:50%"></div><div style="position:absolute;left:12.4px;top:6.399999999999999px;height:24px;line-height:24px;font-size:16.8px;color:#fff;white-space:nowrap;">启用</div></div>
<div style="position:absolute;left:22px;top:307.2px;width:25px;height:25px;background:#fff;border:1px solid #dadada;border-radius:3px"></div>
<div style="position:absolute;left:68.8px;top:303.9px;height:30px;line-height:30px;font-size:19.6px;color:#666;white-space:nowrap;width:58px;text-align:center;">4</div>
<div style="position:absolute;left:148.25px;top:303.9px;height:30px;line-height:30px;font-size:19.6px;color:#666;white-space:nowrap;">98</div>
<div style="position:absolute;left:261.5px;top:303.9px;height:30px;line-height:30px;font-size:19.6px;color:#666;white-space:nowrap;">BTC</div>
<div style="position:absolute;left:403.25px;top:303.9px;height:30px;line-height:30px;font-size:19.6px;color:#666;white-space:nowrap;">84292.1…</div>
<div style="position:absolute;left:544.75px;top:303.9px;height:30px;line-height:30px;font-size:19.6px;color:#666;white-space:nowrap;">83397.0…</div>
<div style="position:absolute;left:686.25px;top:303.9px;height:30px;line-height:30px;font-size:19.6px;color:#666;white-space:nowrap;">0.000000</div>
<div style="position:absolute;left:827.75px;top:303.9px;height:30px;line-height:30px;font-size:19.6px;color:#666;white-space:nowrap;">0.000000</div>
<div style="position:absolute;left:969.25px;top:303.9px;height:30px;line-height:30px;font-size:19.6px;color:#666;white-space:nowrap;">1.000000</div>
<svg style="left:1109.7px;top:299.0px;" width="70.5" height="39.4" viewBox="0 0 70.5 39.4"><defs><clipPath id="lg3"><rect x="0" y="0" width="70.5" height="39.4"/></clipPath></defs><g clip-path="url(#lg3)"><circle cx="35.25" cy="35.25" r="35.25" fill="#f7931a" /><g transform="scale(1.1016)"><path d="m46.103,27.444c0.637-4.258-2.605-6.547-7.038-8.074l1.438-5.768-3.511-0.875-1.4,5.616c-0.923-0.23-1.871-0.447-2.813-0.662l1.41-5.653-3.509-0.875-1.439,5.766c-0.764-0.174-1.514-0.346-2.242-0.527l0.004-0.018-4.842-1.209-0.934,3.75s2.605,0.597 2.55,0.634c1.422,0.355 1.679,1.296 1.636,2.042l-1.638,6.571c0.098,0.025 0.225,0.061 0.365,0.117-0.117-0.029-0.242-0.061-0.371-0.092l-2.296,9.205c-0.174,0.432-0.615,1.08-1.609,0.834 0.035,0.051-2.552-0.637-2.552-0.637l-1.743,4.019 4.569,1.139c0.85,0.213 1.683,0.436 2.503,0.646l-1.453,5.834 3.507,0.875 1.439-5.772c0.958,0.26 1.888,0.5 2.798,0.726l-1.434,5.745 3.511,0.875 1.453-5.823c5.987,1.133 10.489,0.676 12.384-4.739 1.527-4.36-0.076-6.875-3.226-8.515 2.294-0.529 4.022-2.038 4.483-5.155zm-8.022,11.249c-1.085,4.36-8.426,2.003-10.806,1.412l1.928-7.729c2.38,0.594 10.012,1.77 8.878,6.317zm1.086-11.312c-0.99,3.966-7.1,1.951-9.082,1.457l1.748-7.01c1.982,0.494 8.365,1.416 7.334,5.553z" fill="#fff"/></g></g></svg>
<div style="position:absolute;left:1251.7px;top:303.6px;width:80.3px;height:33.6px;background:#5fb878;border-radius:17px"><div style="position:absolute;left:49.1px;top:5.7px;width:22.4px;height:22.4px;background:#fff;border-radius:50%"></div><div style="position:absolute;left:12.4px;top:6.399999999999999px;height:24px;line-height:24px;font-size:16.8px;color:#fff;white-space:nowrap;">启用</div></div>
<div style="position:absolute;left:1393.2px;top:303.6px;width:80.3px;height:33.6px;background:#5fb878;border-radius:17px"><div style="position:absolute;left:49.1px;top:5.7px;width:22.4px;height:22.4px;background:#fff;border-radius:50%"></div><div style="position:absolute;left:12.4px;top:6.399999999999999px;height:24px;line-height:24px;font-size:16.8px;color:#fff;white-space:nowrap;">启用</div></div>
<div style="position:absolute;left:1534.7px;top:303.6px;width:80.3px;height:33.6px;background:#5fb878;border-radius:17px"><div style="position:absolute;left:49.1px;top:5.7px;width:22.4px;height:22.4px;background:#fff;border-radius:50%"></div><div style="position:absolute;left:12.4px;top:6.399999999999999px;height:24px;line-height:24px;font-size:16.8px;color:#fff;white-space:nowrap;">启用</div></div>
<div style="position:absolute;left:22px;top:361.8px;width:25px;height:25px;background:#fff;border:1px solid #dadada;border-radius:3px"></div>
<div style="position:absolute;left:68.8px;top:358.5px;height:30px;line-height:30px;font-size:19.6px;color:#666;white-space:nowrap;width:58px;text-align:center;">5</div>
<div style="position:absolute;left:148.25px;top:358.5px;height:30px;line-height:30px;font-size:19.6px;color:#666;white-space:nowrap;">1</div>
<div style="position:absolute;left:261.5px;top:358.5px;height:30px;line-height:30px;font-size:19.6px;color:#666;white-space:nowrap;">USDT</div>
<div style="position:absolute;left:403.25px;top:358.5px;height:30px;line-height:30px;font-size:19.6px;color:#666;white-space:nowrap;">1.000000</div>
<div style="position:absolute;left:686.25px;top:358.5px;height:30px;line-height:30px;font-size:19.6px;color:#666;white-space:nowrap;">0.050000</div>
<div style="position:absolute;left:827.75px;top:358.5px;height:30px;line-height:30px;font-size:19.6px;color:#666;white-space:nowrap;">0.005000</div>
<div style="position:absolute;left:969.25px;top:358.5px;height:30px;line-height:30px;font-size:19.6px;color:#666;white-space:nowrap;">10.000000</div>
<svg style="left:1109.7px;top:353.6px;" width="70.5" height="39.4" viewBox="0 0 70.5 39.4"><defs><clipPath id="lg4"><rect x="0" y="0" width="70.5" height="39.4"/></clipPath></defs><g clip-path="url(#lg4)"><path d="M16.55 12.8 H54.8 L65.7 34.5 L62.5 39.6 H9.1 L5.75 34.5 Z" fill="#27a67d"/><rect x="21" y="20.1" width="29.4" height="6.7" fill="#fff"/><rect x="32.1" y="20.1" width="7.1" height="16.8" fill="#fff"/><ellipse cx="35.55" cy="35.1" rx="17.8" ry="3.5" fill="none" stroke="#c4ecdd" stroke-width="1"/></g></svg>
<div style="position:absolute;left:1251.7px;top:358.2px;width:80.3px;height:33.6px;background:#5fb878;border-radius:17px"><div style="position:absolute;left:49.1px;top:5.7px;width:22.4px;height:22.4px;background:#fff;border-radius:50%"></div><div style="position:absolute;left:12.4px;top:6.399999999999999px;height:24px;line-height:24px;font-size:16.8px;color:#fff;white-space:nowrap;">启用</div></div>
<div style="position:absolute;left:1393.2px;top:358.2px;width:80.3px;height:33.6px;background:#5fb878;border-radius:17px"><div style="position:absolute;left:49.1px;top:5.7px;width:22.4px;height:22.4px;background:#fff;border-radius:50%"></div><div style="position:absolute;left:12.4px;top:6.399999999999999px;height:24px;line-height:24px;font-size:16.8px;color:#fff;white-space:nowrap;">启用</div></div>
<div style="position:absolute;left:1534.7px;top:358.2px;width:80.3px;height:33.6px;background:#5fb878;border-radius:17px"><div style="position:absolute;left:49.1px;top:5.7px;width:22.4px;height:22.4px;background:#fff;border-radius:50%"></div><div style="position:absolute;left:12.4px;top:6.399999999999999px;height:24px;line-height:24px;font-size:16.8px;color:#fff;white-space:nowrap;">启用</div></div>
<div style="position:absolute;left:22px;top:416.4px;width:25px;height:25px;background:#fff;border:1px solid #dadada;border-radius:3px"></div>
<div style="position:absolute;left:68.8px;top:413.1px;height:30px;line-height:30px;font-size:19.6px;color:#666;white-space:nowrap;width:58px;text-align:center;">6</div>
<div style="position:absolute;left:148.25px;top:413.1px;height:30px;line-height:30px;font-size:19.6px;color:#666;white-space:nowrap;">1</div>
<div style="position:absolute;left:261.5px;top:413.1px;height:30px;line-height:30px;font-size:19.6px;color:#666;white-space:nowrap;">USDC</div>
<div style="position:absolute;left:403.25px;top:413.1px;height:30px;line-height:30px;font-size:19.6px;color:#666;white-space:nowrap;">1.000200</div>
<div style="position:absolute;left:544.75px;top:413.1px;height:30px;line-height:30px;font-size:19.6px;color:#666;white-space:nowrap;">1.000100</div>
<div style="position:absolute;left:686.25px;top:413.1px;height:30px;line-height:30px;font-size:19.6px;color:#666;white-space:nowrap;">0.100000</div>
<div style="position:absolute;left:827.75px;top:413.1px;height:30px;line-height:30px;font-size:19.6px;color:#666;white-space:nowrap;">0.005000</div>
<div style="position:absolute;left:969.25px;top:413.1px;height:30px;line-height:30px;font-size:19.6px;color:#666;white-space:nowrap;">10.000000</div>
<svg style="left:1109.7px;top:408.2px;" width="70.5" height="39.4" viewBox="0 0 70.5 39.4"><defs><clipPath id="lg5"><rect x="0" y="0" width="70.5" height="39.4"/></clipPath></defs><g clip-path="url(#lg5)"><circle cx="35.25" cy="35.25" r="35.25" fill="#2775ca" /><path d="M27.9 12.3 A24 24 0 0 0 11.6 40" fill="none" stroke="#fff" stroke-width="5"/><path d="M42.6 12.3 A24 24 0 0 1 58.9 40" fill="none" stroke="#fff" stroke-width="5"/><rect x="33.4" y="17.8" width="4.3" height="5.4" fill="#fff"/><path d="M43.4 30 Q43 25.4 35.4 25.4 Q28 25.4 28 30.6 Q28 34.6 35.4 36 Q41.6 37.2 42.6 41" fill="none" stroke="#fff" stroke-width="4.6"/></g></svg>
<div style="position:absolute;left:1251.7px;top:412.8px;width:80.3px;height:33.6px;background:#5fb878;border-radius:17px"><div style="position:absolute;left:49.1px;top:5.7px;width:22.4px;height:22.4px;background:#fff;border-radius:50%"></div><div style="position:absolute;left:12.4px;top:6.399999999999999px;height:24px;line-height:24px;font-size:16.8px;color:#fff;white-space:nowrap;">启用</div></div>
<div style="position:absolute;left:1393.2px;top:412.8px;width:80.3px;height:33.6px;background:#5fb878;border-radius:17px"><div style="position:absolute;left:49.1px;top:5.7px;width:22.4px;height:22.4px;background:#fff;border-radius:50%"></div><div style="position:absolute;left:12.4px;top:6.399999999999999px;height:24px;line-height:24px;font-size:16.8px;color:#fff;white-space:nowrap;">启用</div></div>
<div style="position:absolute;left:1534.7px;top:412.8px;width:80.3px;height:33.6px;background:#5fb878;border-radius:17px"><div style="position:absolute;left:49.1px;top:5.7px;width:22.4px;height:22.4px;background:#fff;border-radius:50%"></div><div style="position:absolute;left:12.4px;top:6.399999999999999px;height:24px;line-height:24px;font-size:16.8px;color:#fff;white-space:nowrap;">启用</div></div>
<div style="position:absolute;left:22px;top:471.0px;width:25px;height:25px;background:#fff;border:1px solid #dadada;border-radius:3px"></div>
<div style="position:absolute;left:68.8px;top:467.7px;height:30px;line-height:30px;font-size:19.6px;color:#666;white-space:nowrap;width:58px;text-align:center;">7</div>
<div style="position:absolute;left:148.25px;top:467.7px;height:30px;line-height:30px;font-size:19.6px;color:#666;white-space:nowrap;">1</div>
<div style="position:absolute;left:261.5px;top:467.7px;height:30px;line-height:30px;font-size:19.6px;color:#666;white-space:nowrap;">FIL</div>
<div style="position:absolute;left:403.25px;top:467.7px;height:30px;line-height:30px;font-size:19.6px;color:#666;white-space:nowrap;">2.915000</div>
<div style="position:absolute;left:544.75px;top:467.7px;height:30px;line-height:30px;font-size:19.6px;color:#666;white-space:nowrap;">2.787700</div>
<div style="position:absolute;left:686.25px;top:467.7px;height:30px;line-height:30px;font-size:19.6px;color:#666;white-space:nowrap;">0.100000</div>
<div style="position:absolute;left:827.75px;top:467.7px;height:30px;line-height:30px;font-size:19.6px;color:#666;white-space:nowrap;">0.005000</div>
<div style="position:absolute;left:969.25px;top:467.7px;height:30px;line-height:30px;font-size:19.6px;color:#666;white-space:nowrap;">10.000000</div>
<svg style="left:1109.7px;top:462.8px;" width="70.5" height="39.4" viewBox="0 0 70.5 39.4"><defs><clipPath id="lg6"><rect x="0" y="0" width="70.5" height="39.4"/></clipPath></defs><g clip-path="url(#lg6)"><circle cx="35.25" cy="35.25" r="35.25" fill="#42c1ca" /><path d="M52.4 16 Q50.6 13 47.2 13.4 Q43.6 14 42 20.6 L35.4 41.2" fill="none" stroke="#fff" stroke-width="2.6" stroke-linecap="round"/><path d="M26.8 29.4 L49 32 M25.8 35.6 L49 38.6" stroke="#fff" stroke-width="2.4" fill="none"/></g></svg>
<div style="position:absolute;left:1251.7px;top:467.4px;width:80.3px;height:33.6px;background:#5fb878;border-radius:17px"><div style="position:absolute;left:49.1px;top:5.7px;width:22.4px;height:22.4px;background:#fff;border-radius:50%"></div><div style="position:absolute;left:12.4px;top:6.399999999999999px;height:24px;line-height:24px;font-size:16.8px;color:#fff;white-space:nowrap;">启用</div></div>
<div style="position:absolute;left:1393.2px;top:467.4px;width:80.3px;height:33.6px;background:#5fb878;border-radius:17px"><div style="position:absolute;left:49.1px;top:5.7px;width:22.4px;height:22.4px;background:#fff;border-radius:50%"></div><div style="position:absolute;left:12.4px;top:6.399999999999999px;height:24px;line-height:24px;font-size:16.8px;color:#fff;white-space:nowrap;">启用</div></div>
<div style="position:absolute;left:1534.7px;top:467.4px;width:80.3px;height:33.6px;background:#5fb878;border-radius:17px"><div style="position:absolute;left:49.1px;top:5.7px;width:22.4px;height:22.4px;background:#fff;border-radius:50%"></div><div style="position:absolute;left:12.4px;top:6.399999999999999px;height:24px;line-height:24px;font-size:16.8px;color:#fff;white-space:nowrap;">启用</div></div>
<div style="position:absolute;left:22px;top:525.6px;width:25px;height:25px;background:#fff;border:1px solid #dadada;border-radius:3px"></div>
<div style="position:absolute;left:68.8px;top:522.3px;height:30px;line-height:30px;font-size:19.6px;color:#666;white-space:nowrap;width:58px;text-align:center;">8</div>
<div style="position:absolute;left:148.25px;top:522.3px;height:30px;line-height:30px;font-size:19.6px;color:#666;white-space:nowrap;">1</div>
<div style="position:absolute;left:261.5px;top:522.3px;height:30px;line-height:30px;font-size:19.6px;color:#666;white-space:nowrap;">LRC</div>
<div style="position:absolute;left:403.25px;top:522.3px;height:30px;line-height:30px;font-size:19.6px;color:#666;white-space:nowrap;">0.102100</div>
<div style="position:absolute;left:544.75px;top:522.3px;height:30px;line-height:30px;font-size:19.6px;color:#666;white-space:nowrap;">0.099100</div>
<div style="position:absolute;left:686.25px;top:522.3px;height:30px;line-height:30px;font-size:19.6px;color:#666;white-space:nowrap;">0.100000</div>
<div style="position:absolute;left:827.75px;top:522.3px;height:30px;line-height:30px;font-size:19.6px;color:#666;white-space:nowrap;">0.005000</div>
<div style="position:absolute;left:969.25px;top:522.3px;height:30px;line-height:30px;font-size:19.6px;color:#666;white-space:nowrap;">10.000000</div>
<svg style="left:1109.7px;top:517.4px;" width="70.5" height="39.4" viewBox="0 0 70.5 39.4"><defs><clipPath id="lg7"><rect x="0" y="0" width="70.5" height="39.4"/></clipPath></defs><g clip-path="url(#lg7)"><circle cx="35.25" cy="35.25" r="35.25" fill="#2069fb" /><circle cx="35.25" cy="35.25" r="30.2" fill="none" stroke="#fff" stroke-width="1.6"/><path d="M35.55 12 L21.5 33.8 L35.55 42 L50.1 33.8 Z M35.55 12 V42" fill="none" stroke="#fff" stroke-width="2" stroke-linejoin="miter"/></g></svg>
<div style="position:absolute;left:1251.7px;top:522.0px;width:80.3px;height:33.6px;background:#5fb878;border-radius:17px"><div style="position:absolute;left:49.1px;top:5.7px;width:22.4px;height:22.4px;background:#fff;border-radius:50%"></div><div style="position:absolute;left:12.4px;top:6.399999999999999px;height:24px;line-height:24px;font-size:16.8px;color:#fff;white-space:nowrap;">启用</div></div>
<div style="position:absolute;left:1393.2px;top:522.0px;width:80.3px;height:33.6px;background:#5fb878;border-radius:17px"><div style="position:absolute;left:49.1px;top:5.7px;width:22.4px;height:22.4px;background:#fff;border-radius:50%"></div><div style="position:absolute;left:12.4px;top:6.399999999999999px;height:24px;line-height:24px;font-size:16.8px;color:#fff;white-space:nowrap;">启用</div></div>
<div style="position:absolute;left:1534.7px;top:522.0px;width:80.3px;height:33.6px;background:#5fb878;border-radius:17px"><div style="position:absolute;left:49.1px;top:5.7px;width:22.4px;height:22.4px;background:#fff;border-radius:50%"></div><div style="position:absolute;left:12.4px;top:6.399999999999999px;height:24px;line-height:24px;font-size:16.8px;color:#fff;white-space:nowrap;">启用</div></div>
<div style="position:absolute;left:22px;top:580.2px;width:25px;height:25px;background:#fff;border:1px solid #dadada;border-radius:3px"></div>
<div style="position:absolute;left:68.8px;top:576.9px;height:30px;line-height:30px;font-size:19.6px;color:#666;white-space:nowrap;width:58px;text-align:center;">9</div>
<div style="position:absolute;left:148.25px;top:576.9px;height:30px;line-height:30px;font-size:19.6px;color:#666;white-space:nowrap;">1</div>
<div style="position:absolute;left:261.5px;top:576.9px;height:30px;line-height:30px;font-size:19.6px;color:#666;white-space:nowrap;">BCH</div>
<div style="position:absolute;left:403.25px;top:576.9px;height:30px;line-height:30px;font-size:19.6px;color:#666;white-space:nowrap;">313.930…</div>
<div style="position:absolute;left:544.75px;top:576.9px;height:30px;line-height:30px;font-size:19.6px;color:#666;white-space:nowrap;">304.540…</div>
<div style="position:absolute;left:686.25px;top:576.9px;height:30px;line-height:30px;font-size:19.6px;color:#666;white-space:nowrap;">0.100000</div>
<div style="position:absolute;left:827.75px;top:576.9px;height:30px;line-height:30px;font-size:19.6px;color:#666;white-space:nowrap;">0.005000</div>
<div style="position:absolute;left:969.25px;top:576.9px;height:30px;line-height:30px;font-size:19.6px;color:#666;white-space:nowrap;">10.000000</div>
<svg style="left:1109.7px;top:572.0px;" width="70.5" height="39.4" viewBox="0 0 70.5 39.4"><defs><clipPath id="lg8"><rect x="0" y="0" width="70.5" height="39.4"/></clipPath></defs><g clip-path="url(#lg8)"><circle cx="35.25" cy="35.25" r="35.25" fill="#0ac18e" /><g transform="rotate(-28 35.25 35.25) scale(1.1016)"><path d="m46.103,27.444c0.637-4.258-2.605-6.547-7.038-8.074l1.438-5.768-3.511-0.875-1.4,5.616c-0.923-0.23-1.871-0.447-2.813-0.662l1.41-5.653-3.509-0.875-1.439,5.766c-0.764-0.174-1.514-0.346-2.242-0.527l0.004-0.018-4.842-1.209-0.934,3.75s2.605,0.597 2.55,0.634c1.422,0.355 1.679,1.296 1.636,2.042l-1.638,6.571c0.098,0.025 0.225,0.061 0.365,0.117-0.117-0.029-0.242-0.061-0.371-0.092l-2.296,9.205c-0.174,0.432-0.615,1.08-1.609,0.834 0.035,0.051-2.552-0.637-2.552-0.637l-1.743,4.019 4.569,1.139c0.85,0.213 1.683,0.436 2.503,0.646l-1.453,5.834 3.507,0.875 1.439-5.772c0.958,0.26 1.888,0.5 2.798,0.726l-1.434,5.745 3.511,0.875 1.453-5.823c5.987,1.133 10.489,0.676 12.384-4.739 1.527-4.36-0.076-6.875-3.226-8.515 2.294-0.529 4.022-2.038 4.483-5.155zm-8.022,11.249c-1.085,4.36-8.426,2.003-10.806,1.412l1.928-7.729c2.38,0.594 10.012,1.77 8.878,6.317zm1.086-11.312c-0.99,3.966-7.1,1.951-9.082,1.457l1.748-7.01c1.982,0.494 8.365,1.416 7.334,5.553z" fill="#fff"/></g></g></svg>
<div style="position:absolute;left:1251.7px;top:576.6px;width:80.3px;height:33.6px;background:#5fb878;border-radius:17px"><div style="position:absolute;left:49.1px;top:5.7px;width:22.4px;height:22.4px;background:#fff;border-radius:50%"></div><div style="position:absolute;left:12.4px;top:6.399999999999999px;height:24px;line-height:24px;font-size:16.8px;color:#fff;white-space:nowrap;">启用</div></div>
<div style="position:absolute;left:1393.2px;top:576.6px;width:80.3px;height:33.6px;background:#5fb878;border-radius:17px"><div style="position:absolute;left:49.1px;top:5.7px;width:22.4px;height:22.4px;background:#fff;border-radius:50%"></div><div style="position:absolute;left:12.4px;top:6.399999999999999px;height:24px;line-height:24px;font-size:16.8px;color:#fff;white-space:nowrap;">启用</div></div>
<div style="position:absolute;left:1534.7px;top:576.6px;width:80.3px;height:33.6px;background:#5fb878;border-radius:17px"><div style="position:absolute;left:49.1px;top:5.7px;width:22.4px;height:22.4px;background:#fff;border-radius:50%"></div><div style="position:absolute;left:12.4px;top:6.399999999999999px;height:24px;line-height:24px;font-size:16.8px;color:#fff;white-space:nowrap;">启用</div></div>
<div style="position:absolute;left:22px;top:634.8px;width:25px;height:25px;background:#fff;border:1px solid #dadada;border-radius:3px"></div>
<div style="position:absolute;left:68.8px;top:631.5px;height:30px;line-height:30px;font-size:19.6px;color:#666;white-space:nowrap;width:58px;text-align:center;">10</div>
<div style="position:absolute;left:148.25px;top:631.5px;height:30px;line-height:30px;font-size:19.6px;color:#666;white-space:nowrap;">1</div>
<div style="position:absolute;left:261.5px;top:631.5px;height:30px;line-height:30px;font-size:19.6px;color:#666;white-space:nowrap;">ETC</div>
<div style="position:absolute;left:403.25px;top:631.5px;height:30px;line-height:30px;font-size:19.6px;color:#666;white-space:nowrap;">17.077500</div>
<div style="position:absolute;left:544.75px;top:631.5px;height:30px;line-height:30px;font-size:19.6px;color:#666;white-space:nowrap;">16.854600</div>
<div style="position:absolute;left:686.25px;top:631.5px;height:30px;line-height:30px;font-size:19.6px;color:#666;white-space:nowrap;">0.100000</div>
<div style="position:absolute;left:827.75px;top:631.5px;height:30px;line-height:30px;font-size:19.6px;color:#666;white-space:nowrap;">0.005000</div>
<div style="position:absolute;left:969.25px;top:631.5px;height:30px;line-height:30px;font-size:19.6px;color:#666;white-space:nowrap;">10.000000</div>
<svg style="left:1109.7px;top:626.6px;" width="70.5" height="39.4" viewBox="0 0 70.5 39.4"><defs><clipPath id="lg9"><rect x="0" y="0" width="70.5" height="39.4"/></clipPath></defs><g clip-path="url(#lg9)"><circle cx="35.25" cy="35.25" r="35.25" fill="#f0f0f0" /><path d="M35 10.9 L20.7 32.5 L35 24.2 Z" fill="#22b04a"/><path d="M35 10.9 L50.1 32.5 L35 24.2 Z" fill="#129a3c"/><path d="M35 26.6 L20.7 34.4 L28 41 H35 Z" fill="#27b84f"/><path d="M35 26.6 L50.1 34.4 L42.4 41 H35 Z" fill="#16a443"/></g></svg>
<div style="position:absolute;left:1251.7px;top:631.2px;width:80.3px;height:33.6px;background:#5fb878;border-radius:17px"><div style="position:absolute;left:49.1px;top:5.7px;width:22.4px;height:22.4px;background:#fff;border-radius:50%"></div><div style="position:absolute;left:12.4px;top:6.399999999999999px;height:24px;line-height:24px;font-size:16.8px;color:#fff;white-space:nowrap;">启用</div></div>
<div style="position:absolute;left:1393.2px;top:631.2px;width:80.3px;height:33.6px;background:#5fb878;border-radius:17px"><div style="position:absolute;left:49.1px;top:5.7px;width:22.4px;height:22.4px;background:#fff;border-radius:50%"></div><div style="position:absolute;left:12.4px;top:6.399999999999999px;height:24px;line-height:24px;font-size:16.8px;color:#fff;white-space:nowrap;">启用</div></div>
<div style="position:absolute;left:1534.7px;top:631.2px;width:80.3px;height:33.6px;background:#5fb878;border-radius:17px"><div style="position:absolute;left:49.1px;top:5.7px;width:22.4px;height:22.4px;background:#fff;border-radius:50%"></div><div style="position:absolute;left:12.4px;top:6.399999999999999px;height:24px;line-height:24px;font-size:16.8px;color:#fff;white-space:nowrap;">启用</div></div>
<div style="position:absolute;left:0px;top:674.25px;width:1620.5px;height:14px;background:#fff"></div>
<div style="position:absolute;left:0.75px;top:675.0px;width:1112.5px;height:12.5px;background:#c1c1c1;border-radius:6.5px"></div>
<div style="position:absolute;left:0px;top:687.75px;width:1620.5px;height:1px;background:#eee"></div>
<svg style="left:24px;top:707.25px;" width="11" height="18" viewBox="0 0 11 18"><path d="M9.6 0.8 L1.4 9 L9.6 17.2" fill="none" stroke="#d2d2d2" stroke-width="1.7"/></svg>
<div style="position:absolute;left:56.25px;top:698.0px;width:42px;height:36.5px;background:#009688;border-radius:3px"></div>
<div style="position:absolute;left:56.25px;top:703.25px;height:26px;line-height:26px;font-size:16.8px;color:#fff;white-space:nowrap;width:42px;text-align:center;">1</div>
<div style="position:absolute;left:103.25px;top:703.25px;height:26px;line-height:26px;font-size:16.8px;color:#333;white-space:nowrap;width:30px;text-align:center;">2</div>
<div style="position:absolute;left:145px;top:703.25px;height:26px;line-height:26px;font-size:16.8px;color:#333;white-space:nowrap;width:30px;text-align:center;">3</div>
<div style="position:absolute;left:174px;top:703.25px;height:26px;line-height:26px;font-size:16.8px;color:#999;white-space:nowrap;width:30px;text-align:center;">…</div>
<div style="position:absolute;left:202px;top:703.25px;height:26px;line-height:26px;font-size:16.8px;color:#333;white-space:nowrap;width:30px;text-align:center;">5</div>
<svg style="left:259.5px;top:707.25px;" width="11" height="18" viewBox="0 0 11 18"><path d="M1.4 0.8 L9.6 9 L1.4 17.2" fill="none" stroke="#333" stroke-width="1.9"/></svg>
<div style="position:absolute;left:292px;top:704.25px;height:26px;line-height:26px;font-size:16.8px;color:#aaa;white-space:nowrap;">到第</div>
<div style="position:absolute;left:338.8px;top:698.0px;width:56.4px;height:36.5px;border:1px solid #ebebeb;border-radius:3px;background:#fff"></div>
<div style="position:absolute;left:339.5px;top:703.25px;height:26px;line-height:26px;font-size:16.8px;color:#5f5f5f;white-space:nowrap;width:55.5px;text-align:center;">1</div>
<div style="position:absolute;left:409.5px;top:704.25px;height:26px;line-height:26px;font-size:16.8px;color:#aaa;white-space:nowrap;">页</div>
<div style="position:absolute;left:440.2px;top:698.0px;width:65px;height:36.5px;border:1px solid #ebebeb;border-radius:3px;background:#fff"></div>
<div style="position:absolute;left:440.4px;top:705.25px;height:26px;line-height:26px;font-size:16.8px;color:#333;white-space:nowrap;width:64px;text-align:center;">确定</div>
<div style="position:absolute;left:519px;top:703.25px;height:26px;line-height:26px;font-size:16.8px;color:#555;white-space:nowrap;">共 42 条</div>
<div style="position:absolute;left:595px;top:698.0px;width:103.8px;height:36.5px;border:1px solid #ebebeb;border-radius:3px;background:#fff"></div>
<div style="position:absolute;left:606px;top:703.25px;height:26px;line-height:26px;font-size:16.8px;color:#333;white-space:nowrap;">10 条/页</div>
<svg style="left:679.6px;top:712.95px;" width="12.6" height="8.4" viewBox="0 0 12.6 8.4"><path d="M1 1 L6.3 6.8 L11.6 1" fill="none" stroke="#222" stroke-width="1.9"/></svg>
</div>
<div style="position:absolute;left:372.5px;top:230.75px;width:1621.5px;height:745.25px;border:1px solid #e7e7e7;pointer-events:none"></div>
<div style="position:absolute;left:2035.5px;top:128.75px;width:12.5px;height:861.5px;background:#c1c1c1;border-radius:6.5px"></div>
<div style="position:absolute;left:330.5px;top:1000.5px;width:1717.5px;height:58.5px;background:#fff"></div>
<div style="position:absolute;left:352px;top:1017.4000000000001px;height:30px;line-height:30px;font-size:19.6px;color:#666;white-space:nowrap;">copyright © 2024 <span style="color:#4890e2">蜜桃源码网--www.mitaobo.com</span> all rights reserved.</div>
<div style="position:absolute;left:1800px;top:1017.4000000000001px;height:30px;line-height:30px;font-size:19.6px;color:#666;white-space:nowrap;width:228px;text-align:right;">Version 3.1.8</div>
<div style="position:absolute;left:0px;top:0px;width:2048px;height:2.4px;background:linear-gradient(90deg,#4a4a48 0,#444 330px,#3c3434 345px,#5a5258 430px,#80889c 520px,#a0aaba 800px,#a2acbc 1100px,#8a94a8 1400px,#94868c 1550px,#6e5c5c 1750px,#3e3838 1850px,#383434 100%)"></div>
</div></body></html>
